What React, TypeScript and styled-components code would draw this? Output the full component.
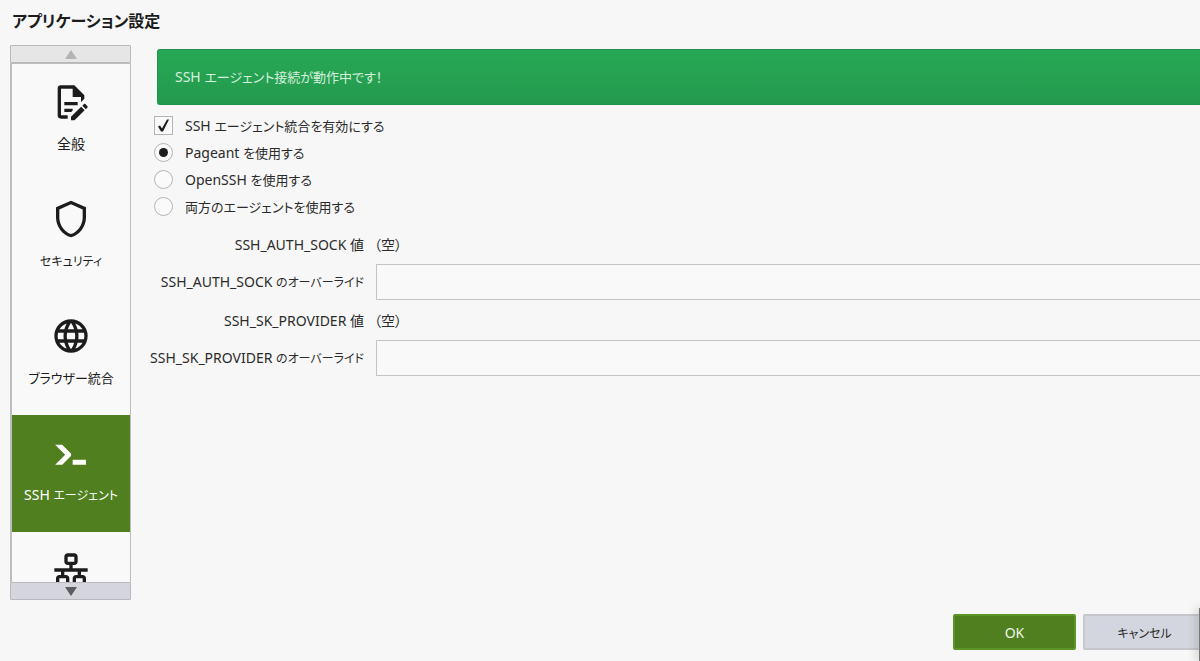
import React, { useState } from "react";
import styled, { createGlobalStyle } from "styled-components";

const GlobalStyle = createGlobalStyle`
  * { box-sizing: border-box; }
  body {
    margin: 0;
    background: #f7f7f7;
    color: #2b2b2b;
    font: 14px/20px "Noto Sans", "Noto Sans CJK JP", sans-serif;
    font-feature-settings: "palt";
  }
  button, input { font: inherit; font-feature-settings: inherit; color: inherit; }
`;

const Dialog = styled.div`
  position: relative;
  display: flex;
  flex-direction: column;
  height: 100vh;
  padding: 9px 0 11px 10px;
  overflow: hidden;
`;

const Title = styled.h1`
  margin: 0 0 12px 2px;
  font-size: 16px;
  line-height: 24px;
  font-weight: 600;
  color: #1c1c1c;
`;

const Body = styled.div`
  display: flex;
  flex: 1;
  min-height: 0;
  gap: 23px;
`;

const Sidebar = styled.nav`
  display: flex;
  flex-direction: column;
  flex: none;
  width: 121px;
`;

const ScrollButton = styled.button`
  display: flex;
  align-items: center;
  justify-content: center;
  flex: none;
  height: 18px;
  padding: 0;
  border: 1px solid #b9b9bb;
  border-radius: 1px;
  background: #d4d5dd;
  color: #5c5d60;
  &:disabled { background: #e6e6e6; color: #b4b4b4; }
`;

const CategoryList = styled.div`
  flex: 1;
  min-height: 0;
  overflow: hidden;
  border: 1px solid #bdbdbd;
  border-width: 1px 1px 0 2px;
  background: #f9f9f9;
`;

const Category = styled.button<{ $active: boolean }>`
  display: flex;
  flex-direction: column;
  align-items: center;
  width: 100%;
  height: 117px;
  padding: 18px 0 0;
  gap: 12px;
  border: 0;
  background: ${(p) => (p.$active ? "#507f1f" : "transparent")};
  color: ${(p) => (p.$active ? "#ffffff" : "#1c1c1c")};
  white-space: nowrap;
`;

const CategoryIcon = styled.svg`
  flex: none;
  width: 40px;
  height: 40px;
  fill: currentColor;
`;

const Kana = styled.span<{ $dense?: boolean }>`
  font-size: ${(p) => (p.$dense ? 12 : 13)}px;
`;

const Content = styled.main`
  flex: 1;
  min-width: 0;
`;

const Banner = styled.div`
  height: 56px;
  margin: 4px 0 7px 3px;
  padding: 17px;
  border: 1px solid #219150;
  border-right: 0;
  border-radius: 3px 0 0 3px;
  background: linear-gradient(#27a855, #24994e);
  color: #d6f0de;
`;

const Option = styled.label`
  display: flex;
  align-items: center;
  gap: 12px;
  height: 27px;
`;

const Toggle = styled.input`
  appearance: none;
  display: grid;
  place-items: center;
  flex: none;
  width: 19px;
  height: 19px;
  margin: 0;
  border: 1px solid #b4b4b4;
  background: #fafafa;
  &[type="radio"] { border-radius: 50%; }
  &[type="radio"]:checked::before {
    content: "";
    width: 9px;
    height: 9px;
    border-radius: 50%;
    background: #1c1c1c;
  }
  &[type="checkbox"]:checked::before {
    content: "";
    width: 13px;
    height: 14px;
    background: #1c1c1c;
    clip-path: path("M1 8 L3 7 L5 10 L10 1 L12 1 L6 13 L4 13 Z");
  }
`;

const Fields = styled.div`
  display: grid;
  grid-template-columns: 210px 1fr;
  grid-auto-rows: 36px;
  align-items: center;
  gap: 2px 12px;
  margin-top: 6px;
`;

const FieldLabel = styled.label`
  justify-self: end;
  padding-top: 1px;
  white-space: nowrap;
`;

const FieldValue = styled.span`
  padding-top: 1px;
  margin-left: -2px;
`;

const TextField = styled.input`
  width: 100%;
  height: 36px;
  padding: 0 8px;
  border: 1px solid #c4c4c4;
  border-right: 0;
  border-radius: 1px 0 0 1px;
  background: #f9f9f9;
`;

const Footer = styled.footer`
  display: flex;
  justify-content: flex-end;
  gap: 7px;
  margin: 14px -6px 0 0;
`;

const ActionButton = styled.button<{ $primary?: boolean }>`
  width: 123px;
  height: 36px;
  padding: 2px 0 0;
  border: 2px solid ${(p) => (p.$primary ? "#5b9428" : "#c6c7cb")};
  border-radius: 2px;
  background: ${(p) => (p.$primary ? "#507f1f" : "#d4d6df")};
  color: ${(p) => (p.$primary ? "#f0f5ea" : "#2b2b2b")};
`;

const WindowEdge = styled.div`
  position: absolute;
  right: 0;
  bottom: 0;
  width: 1px;
  height: 53px;
  background: #777777;
  box-shadow: 0 0 10px 1px rgba(0, 0, 0, 0.35);
`;

const categories = [
  {
    label: "全般",
    path: "M8,12H16V14H8V12M10,20H6V4H13V9H18V12.1L20,10.1V8L14,2H6A2,2 0 0,0 4,4V20A2,2 0 0,0 6,22H10V20M8,18H12.1L13,17.1V16H8V18M20.2,13C20.3,13 20.5,13.1 20.6,13.2L21.9,14.5C22.1,14.7 22.1,15.1 21.9,15.3L20.9,16.3L18.8,14.2L19.8,13.2C19.9,13.1 20,13 20.2,13M20.2,16.9L14.1,23H12V20.9L18.1,14.8L20.2,16.9Z",
  },
  {
    label: <Kana $dense>セキュリティ</Kana>,
    path: "M21,11C21,16.55 17.16,21.74 12,23C6.84,21.74 3,16.55 3,11V5L12,1L21,5V11M12,21C15.75,20 19,15.54 19,11.22V6.3L12,3.18L5,6.3V11.22C5,15.54 8.25,20 12,21Z",
  },
  {
    label: <Kana>ブラウザー統合</Kana>,
    path: "M16.36,14C16.44,13.34 16.5,12.68 16.5,12C16.5,11.32 16.44,10.66 16.36,10H19.74C19.9,10.64 20,11.31 20,12C20,12.69 19.9,13.36 19.74,14M14.59,19.56C15.19,18.45 15.65,17.25 15.97,16H18.92C17.96,17.65 16.43,18.93 14.59,19.56M14.34,14H9.66C9.56,13.34 9.5,12.68 9.5,12C9.5,11.32 9.56,10.65 9.66,10H14.34C14.43,10.65 14.5,11.32 14.5,12C14.5,12.68 14.43,13.34 14.34,14M12,19.96C11.17,18.76 10.5,17.43 10.09,16H13.91C13.5,17.43 12.83,18.76 12,19.96M8,8H5.08C6.03,6.34 7.57,5.06 9.4,4.44C8.8,5.55 8.35,6.75 8,8M5.08,16H8C8.35,17.25 8.8,18.45 9.4,19.56C7.57,18.93 6.03,17.65 5.08,16M4.26,14C4.1,13.36 4,12.69 4,12C4,11.31 4.1,10.64 4.26,10H7.64C7.56,10.66 7.5,11.32 7.5,12C7.5,12.68 7.56,13.34 7.64,14M12,4.03C12.83,5.23 13.5,6.57 13.91,8H10.09C10.5,6.57 11.17,5.23 12,4.03M18.92,8H15.97C15.65,6.75 15.19,5.55 14.59,4.44C16.43,5.07 17.96,6.34 18.92,8M12,2C6.47,2 2,6.5 2,12A10,10 0 0,0 12,22A10,10 0 0,0 22,12A10,10 0 0,0 12,2Z",
  },
  {
    label: <>SSH <Kana $dense>エージェント</Kana></>,
    path: "M13,19V16H21V19H13M8.5,13L2.47,7H6.71L11.67,11.95C12.25,12.54 12.25,13.5 11.67,14.07L6.74,19H2.5L8.5,13Z",
  },
  {
    label: null,
    path: "M10,2C8.89,2 8,2.89 8,4V7C8,8.11 8.89,9 10,9H11V11H2V13H6V15H5C3.89,15 3,15.89 3,17V20C3,21.11 3.89,22 5,22H9C10.11,22 11,21.11 11,20V17C11,15.89 10.11,15 9,15H8V13H16V15H15C13.89,15 13,15.89 13,17V20C13,21.11 13.89,22 15,22H19C20.11,22 21,21.11 21,20V17C21,15.89 20.11,15 19,15H18V13H22V11H13V9H14C15.11,9 16,8.11 16,7V4C16,2.89 15.11,2 14,2H10M10,4H14V7H10V4M5,17H9V20H5V17M15,17H19V20H15V17Z",
  },
];

const agents = [
  <>Pageant <Kana>を使用する</Kana></>,
  <>OpenSSH <Kana>を使用する</Kana></>,
  <Kana>両方のエージェントを使用する</Kana>,
];

export default function App() {
  const [active, setActive] = useState(3);
  const [enabled, setEnabled] = useState(true);
  const [agent, setAgent] = useState(0);

  return (
    <>
      <GlobalStyle />
      <Dialog lang="ja">
        <Title>アプリケーション設定</Title>
        <Body>
          <Sidebar>
            <ScrollButton disabled>
              <svg width="12" height="9" viewBox="0 0 12 9" fill="currentColor"><path d="M6 0L12 9H0Z" /></svg>
            </ScrollButton>
            <CategoryList>
              {categories.map((c, i) => (
                <Category key={i} $active={i === active} onClick={() => setActive(i)}>
                  <CategoryIcon viewBox="0 0 24 24"><path d={c.path} /></CategoryIcon>
                  {c.label && <span>{c.label}</span>}
                </Category>
              ))}
            </CategoryList>
            <ScrollButton>
              <svg width="12" height="9" viewBox="0 0 12 9" fill="currentColor"><path d="M0 0H12L6 9Z" /></svg>
            </ScrollButton>
          </Sidebar>
          <Content>
            <Banner role="status">SSH <Kana>エージェント接続が動作中です！</Kana></Banner>
            <Option>
              <Toggle type="checkbox" checked={enabled} onChange={(e) => setEnabled(e.target.checked)} />
              <span>SSH <Kana>エージェント統合を有効にする</Kana></span>
            </Option>
            {agents.map((name, i) => (
              <Option key={i}>
                <Toggle type="radio" name="agent" checked={agent === i} onChange={() => setAgent(i)} />
                <span>{name}</span>
              </Option>
            ))}
            <Fields>
              <FieldLabel as="span">SSH_AUTH_SOCK 値</FieldLabel>
              <FieldValue>（空）</FieldValue>
              <FieldLabel htmlFor="sock">SSH_AUTH_SOCK <Kana $dense>のオーバーライド</Kana></FieldLabel>
              <TextField id="sock" type="text" />
              <FieldLabel as="span">SSH_SK_PROVIDER 値</FieldLabel>
              <FieldValue>（空）</FieldValue>
              <FieldLabel htmlFor="provider">SSH_SK_PROVIDER <Kana $dense>のオーバーライド</Kana></FieldLabel>
              <TextField id="provider" type="text" />
            </Fields>
          </Content>
        </Body>
        <Footer>
          <ActionButton $primary>OK</ActionButton>
          <ActionButton><Kana $dense>キャンセル</Kana></ActionButton>
        </Footer>
        <WindowEdge />
      </Dialog>
    </>
  );
}
